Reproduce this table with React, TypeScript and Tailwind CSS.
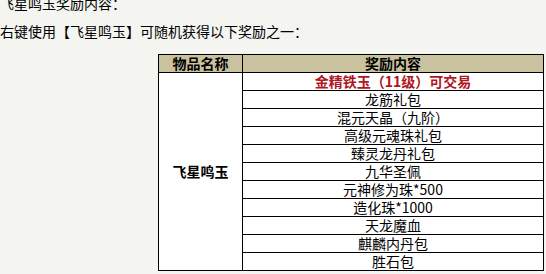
const rewards = [
  "龙筋礼包",
  "混元天晶（九阶）",
  "高级元魂珠礼包",
  "臻灵龙丹礼包",
  "九华圣佩",
  "元神修为珠*500",
  "造化珠*1000",
  "天龙魔血",
  "麒麟内丹包",
  "胜石包",
];

export default function App() {
  return (
    <div
      className="w-[546px] h-[274px] overflow-hidden bg-[#f4f4f1] text-[14px] text-black"
      style={{ fontFamily: '"Noto Sans CJK SC", "Noto Sans", sans-serif' }}
    >
      <p className="mt-[-11px] leading-[28px] whitespace-nowrap">飞星鸣玉奖励内容：</p>
      <p className="leading-[28px] whitespace-nowrap">右键使用【飞星鸣玉】可随机获得以下奖励之一：</p>

      <table className="mt-[9px] ml-[158px] w-[386px] border-collapse border border-black bg-white">
        <thead>
          <tr className="h-[18px] bg-[#c9c29e]">
            <th className="w-[84px] border border-black p-0 text-center font-bold leading-[17px]">物品名称</th>
            <th className="border border-black p-0 text-center font-bold leading-[17px]">奖励内容</th>
          </tr>
        </thead>
        <tbody>
          <tr className="h-[18px]">
            <td rowSpan={11} className="border border-black p-0 text-center align-middle font-bold">
              飞星鸣玉
            </td>
            <td className="border border-black p-0 text-center font-bold leading-[17px] text-[#b0161f]">
              金精铁玉（11级）可交易
            </td>
          </tr>
          {rewards.map((r) => (
            <tr key={r} className="h-[18px]">
              <td className="border border-black p-0 text-center leading-[17px]">{r}</td>
            </tr>
          ))}
        </tbody>
      </table>
    </div>
  );
}
